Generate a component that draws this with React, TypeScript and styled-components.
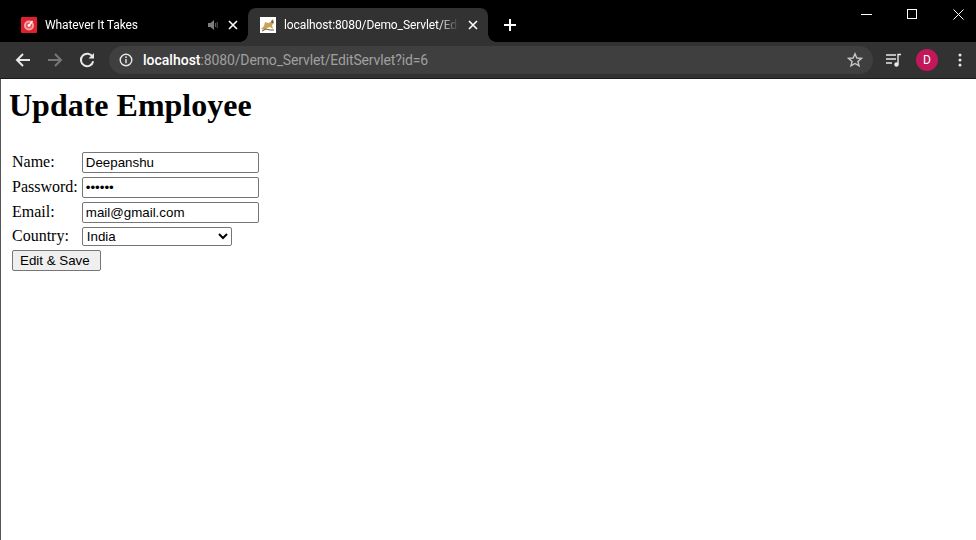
import * as React from "react";
import styled, { createGlobalStyle } from "styled-components";

const GlobalStyle = createGlobalStyle`
  html, body {
    margin: 0;
    padding: 0;
    background: #fff;
  }
  body {
    font-family: "Liberation Serif", serif;
    overflow: hidden;
  }
`;

const Window = styled.div`
  display: flex;
  flex-direction: column;
  width: 976px;
  height: 540px;
  overflow: hidden;
`;

const TabStrip = styled.div`
  display: flex;
  align-items: flex-end;
  height: 42px;
  padding-left: 8px;
  background: #000;
  font-family: Roboto, sans-serif;
  font-size: 12px;
  color: #fff;
`;

const Tab = styled.div<{ $active?: boolean }>`
  position: relative;
  display: flex;
  align-items: center;
  width: 240px;
  height: 34px;
  padding: 0 8px 1px ${(p) => (p.$active ? "12px" : "13px")};
  box-sizing: border-box;
  border-radius: 8px 8px 0 0;
  background: ${(p) => (p.$active ? "#323232" : "transparent")};

  ${(p) =>
    p.$active
      ? `
    &::before, &::after {
      content: "";
      position: absolute;
      bottom: 0;
      width: 8px;
      height: 8px;
    }
    &::before {
      left: -8px;
      background: radial-gradient(circle at 0 0, transparent 7.5px, #323232 8px);
    }
    &::after {
      right: -8px;
      background: radial-gradient(circle at 100% 0, transparent 7.5px, #323232 8px);
    }
  `
      : ""}
`;

const TabTitle = styled.span`
  flex: 1;
  margin-left: 8px;
  overflow: hidden;
  white-space: nowrap;
  letter-spacing: -0.1px;
  -webkit-mask-image: linear-gradient(to right, #000 88%, transparent 100%);
  mask-image: linear-gradient(to right, #000 88%, transparent 100%);
`;

const TabIcon = styled.svg`
  display: block;
  flex: none;
`;

const CloseTab = styled.svg`
  display: block;
  flex: none;
  margin: 0 2px 0 9px;
`;

const NewTab = styled.svg`
  display: block;
  margin: 0 0 11px 16px;
`;

const WindowControls = styled.div`
  display: flex;
  margin: 0 -5px 0 auto;
  align-self: flex-start;
`;

const WindowButton = styled.div`
  display: flex;
  align-items: center;
  justify-content: center;
  width: 46px;
  height: 29px;
`;

const Toolbar = styled.div`
  display: flex;
  align-items: center;
  height: 36px;
  padding: 0 0 0 15px;
  background: #323232;
  border-bottom: 1px solid #1a1a1a;
`;

const NavIcon = styled.svg`
  display: block;
  flex: none;
  margin-right: 16px;
`;

const Omnibox = styled.div`
  display: flex;
  align-items: center;
  width: 764px;
  height: 28px;
  margin-left: -2px;
  padding: 0 10px;
  box-sizing: border-box;
  border-radius: 14px;
  background: #3f3f3f;
  font-family: Roboto, sans-serif;
  font-size: 14px;
`;

const Url = styled.span`
  flex: 1;
  margin-left: 10px;
  color: #a0a0a0;
  white-space: nowrap;
  letter-spacing: -0.14px;
`;

const Host = styled.span`
  color: #fff;
  font-weight: 500;
  letter-spacing: 0;
`;

const ToolIcons = styled.div`
  display: flex;
  align-items: center;
  margin-left: 13px;
`;

const Avatar = styled.div`
  display: flex;
  align-items: center;
  justify-content: center;
  width: 22px;
  height: 22px;
  margin: 0 0 0 14px;
  border-radius: 50%;
  background: #c2185b;
  color: #fff;
  font-family: Roboto, sans-serif;
  font-size: 12px;
`;

const MenuDots = styled.svg`
  display: block;
  margin-left: 20px;
`;

const Page = styled.main`
  flex: 1;
  padding: 8px 8px 0 8px;
  border-left: 1px solid #555;
  background: #fff;
  color: #000;
`;

const Heading = styled.h1`
  margin: 0 0 25px;
  font-size: 32px;
  font-weight: bold;
`;

const FormTable = styled.table`
  border-collapse: separate;
  border-spacing: 2px;
  font-size: 16px;
`;

const Cell = styled.td`
  padding: 1px;
`;

const LabelCell = styled.td`
  padding: 0 1px 2px;
`;

const TextInput = styled.input`
  display: block;
  box-sizing: border-box;
  width: 177px;
  height: 21px;
  margin: 0;
  padding: 1px 3px;
  border: 1px solid #767676;
  border-radius: 2px;
  background: #fff;
  color: #000;
  font-family: "Liberation Sans", sans-serif;
  font-size: 13.33px;
`;

const Select = styled.select`
  display: block;
  box-sizing: border-box;
  width: 150px;
  height: 19px;
  margin: 0;
  border: 1px solid #767676;
  border-radius: 2px;
  background: #fff;
  color: #000;
  font-family: "Liberation Sans", sans-serif;
  font-size: 13.33px;
`;

const SaveButton = styled.button`
  display: block;
  box-sizing: border-box;
  width: 89px;
  height: 21px;
  margin: 0;
  padding: 1px 6px 1px 7px;
  border: 1px solid #767676;
  border-radius: 2px;
  background: #efefef;
  color: #000;
  font-family: "Liberation Sans", sans-serif;
  font-size: 13.33px;
  text-align: left;
`;

const Row = ({ label, children }: { label: string; children: React.ReactNode }) => (
  <tr>
    <LabelCell>{label}</LabelCell>
    <Cell>{children}</Cell>
  </tr>
);

export default function App() {
  return (
    <Window>
      <GlobalStyle />
      <TabStrip>
        <Tab>
          <TabIcon width="16" height="16" viewBox="0 0 16 16">
            <rect width="16" height="16" rx="1" fill="#e0202e" />
            <circle cx="8" cy="8.5" r="5" fill="#f2a5a8" />
            <circle cx="8" cy="8.5" r="3" fill="#e0505a" />
            <circle cx="8" cy="8.5" r="1.4" fill="#fff" />
            <path d="M8 8.5 11.5 4" stroke="#fff" strokeWidth="1.3" />
          </TabIcon>
          <TabTitle>Whatever It Takes</TabTitle>
          <TabIcon width="12" height="12" viewBox="0 0 12 12">
            <path d="M1 4h2.5L7 1v10L3.5 8H1z" fill="#7d7d7d" />
            <path d="M8.5 4v4M10.2 3v6" stroke="#5c5c5c" strokeWidth="1" />
          </TabIcon>
          <CloseTab width="10" height="10" viewBox="0 0 10 10">
            <path d="M1 1l8 8M9 1l-8 8" stroke="#fff" strokeWidth="1.6" />
          </CloseTab>
        </Tab>
        <Tab $active>
          <TabIcon width="16" height="16" viewBox="0 0 16 16">
            <rect width="16" height="16" fill="#fff" />
            <path d="M1 12 4 9 5 5 8 6 11 5 13 2 14 6 12 8 13 12 10 10 7 11 5 13z" fill="#c9a25c" />
            <path d="M2 14 6 12 10 13 14 13" stroke="#6d5a34" strokeWidth="1" fill="none" />
            <path d="M11 4 13 3 13.500 6 11.500 6z" fill="#7a6230" />
          </TabIcon>
          <TabTitle>localhost:8080/Demo_Servlet/EditServlet?id=6</TabTitle>
          <CloseTab width="10" height="10" viewBox="0 0 10 10">
            <path d="M1 1l8 8M9 1l-8 8" stroke="#fff" strokeWidth="1.6" />
          </CloseTab>
        </Tab>
        <NewTab width="12" height="12" viewBox="0 0 12 12">
          <path d="M6 0v12M0 6h12" stroke="#fff" strokeWidth="2" />
        </NewTab>
        <WindowControls>
          <WindowButton>
            <svg width="11" height="11" viewBox="0 0 11 11">
              <path d="M0 5.500h11" stroke="#fff" strokeWidth="1" />
            </svg>
          </WindowButton>
          <WindowButton>
            <svg width="11" height="11" viewBox="0 0 11 11">
              <rect x=".5" y=".5" width="9" height="9" fill="none" stroke="#fff" strokeWidth="1" />
            </svg>
          </WindowButton>
          <WindowButton>
            <svg width="11" height="11" viewBox="0 0 11 11">
              <path d="M.5.500l10 10M10.500.500l-10 10" stroke="#fff" strokeWidth="1" />
            </svg>
          </WindowButton>
        </WindowControls>
      </TabStrip>
      <Toolbar>
        <NavIcon width="16" height="16" viewBox="0 0 16 16">
          <path d="M15 8H2M8 2 2 8l6 6" fill="none" stroke="#e8e8e8" strokeWidth="2" />
        </NavIcon>
        <NavIcon width="16" height="16" viewBox="0 0 16 16">
          <path d="M1 8h13M8 2l6 6-6 6" fill="none" stroke="#777" strokeWidth="2" />
        </NavIcon>
        <NavIcon width="16" height="16" viewBox="0 0 16 16">
          <path d="M13.600 5A6.200 6.200 0 1 0 14.200 9.200" fill="none" stroke="#e8e8e8" strokeWidth="2" />
          <path d="M9.500 6.500H15V1z" fill="#e8e8e8" />
        </NavIcon>
        <Omnibox>
          <svg width="14" height="14" viewBox="0 0 14 14">
            <circle cx="7" cy="7" r="5.800" fill="none" stroke="#e8e8e8" strokeWidth="1.400" />
            <path d="M7 6v4.200" stroke="#e8e8e8" strokeWidth="1.400" />
            <circle cx="7" cy="4.200" r=".9" fill="#e8e8e8" />
          </svg>
          <Url>
            <Host>localhost</Host>:8080/Demo_Servlet/EditServlet?id=6
          </Url>
          <svg width="16" height="16" viewBox="0 0 16 16">
            <path
              d="M8 1.800 9.800 6l4.600.4-3.500 3 1.100 4.500L8 11.500l-4 2.400 1.100-4.500-3.500-3L6.200 6z"
              fill="none"
              stroke="#c8c8c8"
              strokeWidth="1.400"
            />
          </svg>
        </Omnibox>
        <ToolIcons>
          <svg width="16" height="14" viewBox="0 0 16 14">
            <path d="M0 2h10M0 6h10M0 10h6" stroke="#e8e8e8" strokeWidth="1.400" />
            <path d="M12 11V1.500h3" fill="none" stroke="#e8e8e8" strokeWidth="1.400" />
            <circle cx="10.500" cy="11.500" r="2.200" fill="#e8e8e8" />
          </svg>
          <Avatar>D</Avatar>
          <MenuDots width="4" height="14" viewBox="0 0 4 14">
            <circle cx="2" cy="2" r="1.500" fill="#e8e8e8" />
            <circle cx="2" cy="7" r="1.500" fill="#e8e8e8" />
            <circle cx="2" cy="12" r="1.500" fill="#e8e8e8" />
          </MenuDots>
        </ToolIcons>
      </Toolbar>
      <Page>
        <Heading>Update Employee</Heading>
        <form>
          <FormTable>
            <tbody>
              <Row label="Name:">
                <TextInput type="text" defaultValue="Deepanshu" />
              </Row>
              <Row label="Password:">
                <TextInput type="password" defaultValue="secret" />
              </Row>
              <Row label="Email:">
                <TextInput type="text" defaultValue="mail@gmail.com" />
              </Row>
              <Row label="Country:">
                <Select defaultValue="India">
                  <option>India</option>
                </Select>
              </Row>
              <tr>
                <Cell colSpan={2}>
                  <SaveButton type="button">Edit &amp; Save</SaveButton>
                </Cell>
              </tr>
            </tbody>
          </FormTable>
        </form>
      </Page>
    </Window>
  );
}
